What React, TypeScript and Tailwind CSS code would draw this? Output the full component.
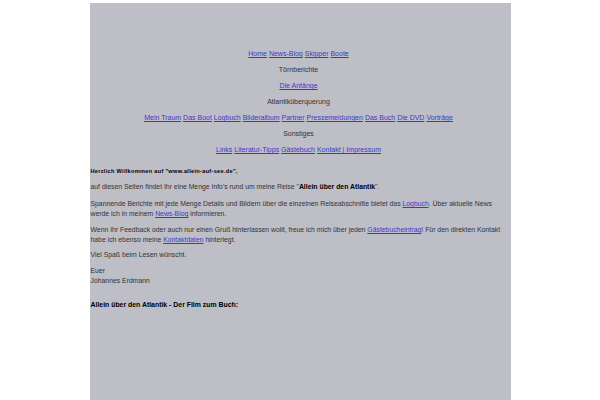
import React from 'react';

const A: React.FC<{ children: React.ReactNode }> = ({ children }) => (
  <a href="#" className="text-[#3a3ad0] underline">
    {children}
  </a>
);

const navRows: { label?: string; links?: string[] }[] = [
  { links: ['Home', 'News-Blog', 'Skipper', 'Boote'] },
  { label: 'Törnberichte' },
  { links: ['Die Anfänge'] },
  { label: 'Atlantiküberquerung' },
  { links: ['Mein Traum', 'Das Boot', 'Logbuch', 'Bilderalbum', 'Partner', 'Pressemeldungen', 'Das Buch', 'Die DVD', 'Vorträge'] },
  { label: 'Sonstiges' },
  { links: ['Links', 'Literatur-Tipps', 'Gästebuch', 'Kontakt | Impressum'] },
];

export default function App() {
  return (
    <div className="min-h-screen bg-white pt-[3px]">
      <div className="mx-auto w-[421px] min-h-[397px] bg-[#bebec6] pl-[1px] pr-[4px] font-['Liberation_Sans',Arial,sans-serif] text-[6.85px] leading-[10px] text-[#333]">
        <div className="flex flex-col items-center gap-[6px] pt-[46px] text-[7px]">
          {navRows.map((row, i) => (
            <div key={i}>
              {row.label}
              {row.links?.map((l, j) => (
                <React.Fragment key={l}>
                  {j > 0 && ' '}
                  <A>{l}</A>
                </React.Fragment>
              ))}
            </div>
          ))}
        </div>

        <p className="mt-[11px] text-[5.6px] font-bold tracking-[0.3px] text-black">
          Herzlich Willkommen auf "www.allein-auf-see.de",
        </p>
        <p className="mt-[6px]">
          auf diesen Seiten findet Ihr eine Menge Info's rund um meine Reise "<b className="text-black">Allein über den Atlantik</b>".
        </p>
        <p className="mt-[7px]">
          Spannende Berichte mit jede Menge Details und Bildern über die einzelnen Reiseabschnitte bietet das <A>Logbuch</A>. Über aktuelle News werde ich in meinem <A>News-Blog</A> informieren.
        </p>
        <p className="mt-[6px]">
          Wenn Ihr Feedback oder auch nur einen Gruß hinterlassen wollt, freue ich mich über jeden <A>Gästebucheintrag</A>! Für den direkten Kontakt habe ich ebenso meine <A>Kontaktdaten</A> hinterlegt.
        </p>
        <p className="mt-[5px]">Viel Spaß beim Lesen wünscht.</p>
        <p className="mt-[6px]">
          Euer
          <br />
          Johannes Erdmann
        </p>
        <p className="mt-[14px] text-[6.9px] font-bold text-black">Allein über den Atlantik - Der Film zum Buch:</p>
      </div>
    </div>
  );
}
